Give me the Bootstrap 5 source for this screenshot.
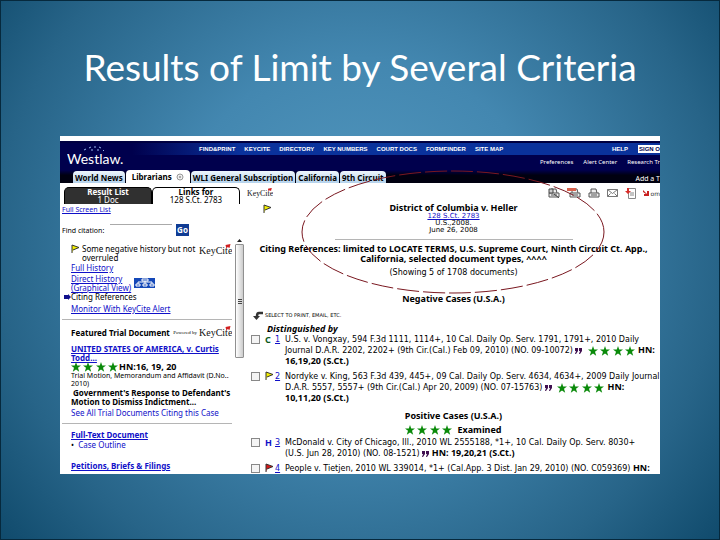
<!DOCTYPE html>
<html lang="en">
<head>
<meta charset="utf-8">
<meta name="viewport" content="width=device-width, initial-scale=1">
<title>Results of Limit by Several Criteria</title>
<link href="https://cdn.jsdelivr.net/npm/bootstrap@5.3.0/dist/css/bootstrap.min.css" rel="stylesheet">
<style>
body{font-family:"Noto Sans","Open Sans",sans-serif;font-size:8px;line-height:9px;color:#000;min-height:100vh;background:radial-gradient(ellipse 68% 90% at 50% 45%,#5499c0 0%,#4387b0 38%,#276488 74%,#0b4566 100%);border:1px solid #06293d}
a{color:#1010c8}
h1{font-family:Lato,sans-serif;font-size:37px;font-weight:400;line-height:44px;color:#fff;margin:0;padding:44px 0 47px}
h2,h3,p{font-size:8px;line-height:10px;margin:0}
h2,h3{font-weight:700}
.shot{margin:0 59px;background:#fff;white-space:nowrap;overflow:hidden;position:relative;padding-top:5px}
.shot svg{display:block;flex:none}
.mast{background:#00004d;border-top:2px solid #000040;color:#fff}
.mast a{color:#fff;text-decoration:none}
.band{background:linear-gradient(90deg,#00004d 12%,#0a329c 30%);height:12px;font:700 6px/13px "Liberation Sans",sans-serif;padding-left:139px}
.band .links{gap:9px}
.band .sign{background:#fff;color:#00004d;height:8px;line-height:8px;margin:2px 0 0 10px;padding-left:1px}
.logo{position:absolute;left:7px;top:1px}
.prefs{height:15px;font-size:6px;line-height:15px;gap:10px}
.tabrow{background:linear-gradient(#00004d,#000010 40%);height:13px;padding-left:13px;gap:1px}
.tabrow .wtab{height:12px;line-height:13px;font-weight:700;background:linear-gradient(#eef6fc,#b4d2ec);border-radius:4px 4px 0 0;padding:0 2px;color:#000}
.tabrow .current{background:#fff;height:13px;padding:0 6px}
.side{width:187px;flex:none}
.rtabs{padding:4px 0 0 4px}
.rtab{width:88px;height:17px;line-height:8px;border-radius:5px 5px 0 0;text-align:center;border:1px solid #000;border-bottom:0}
.rtab.dark{background:#303030}
.rtab a{color:#000;text-decoration:none;display:block}
.rtab.dark a{color:#fff}
.full{font-size:7px;line-height:10px;padding:1px 0 0 2px}
.find{margin-top:8px;height:14px;padding-left:2px}
.find label{width:48px;font-size:7px}
.cite{width:62px;height:12px;border:0;border-top:1px solid #aaa;padding:0;font-size:8px}
.go{background:#103c94;color:#fff;border:0;width:13px;height:12px;line-height:12px;padding:0;font-weight:700;margin-left:4px}
.rule{height:1px;background:#b5b5b5;margin:6px 0 6px 2px}
.pane{width:172px;flex:none;padding-top:7px}
.frame{padding-left:11px}
.fullhist{margin-top:1px}
.monitor{margin-top:3px}
.lead-case{margin-top:5px}
.tight{line-height:9px}
.direct{margin-top:2px;gap:3px}
.citing{margin-left:-7px}
.scroll{width:9px;height:114px;border:1px solid #909090;border-radius:1px;background:linear-gradient(90deg,#fff,#ccc);margin:1px 0 0 3px}
.arrow{margin:2px 0 0 5px}
.pow{font:5px/9px "Liberation Serif",serif;margin-left:auto;padding-right:2px}
.sm{font-size:7px;line-height:8px}
.rating{font-size:9px}
.see{margin-top:2px}
.last{line-height:10px;padding-bottom:2px}
.pet{margin-top:11px}
.results{font-family:"DejaVu Sans",Verdana,sans-serif}
.results h2,.results h3,.results b{font-family:"Noto Sans",sans-serif;font-size:9px}
.results b{line-height:1}
.tools{height:20px}
.tools .icons{margin-left:auto;gap:7px}
.tools .more{color:#333;font-size:6px;text-decoration:none;gap:1px}
.meta{font-size:7px;line-height:7px}
.case{padding-bottom:5px}
.caseflag{position:absolute;left:15px;top:1px}
.divide{width:238px;height:1px;background:#b5b5b5;margin:0 auto 4px}
.select{font-size:5px;line-height:10px;margin-top:6px;padding-left:6px;gap:2px}
.hit{line-height:11px;padding-left:4px}
.hit input{appearance:none;width:9px;height:9px;border:1px solid #888;background:#f4f4f4;margin:1px 5px 0 0;flex:none}
.mark-col{width:10px;flex:none;font:700 9px/11px "Noto Sans",sans-serif}
.num{width:10px;flex:none}
.positive{padding-top:7px}
.third{margin-top:2px}
.shot .inl{display:inline-block;vertical-align:middle;margin:-3px 0}
.ring{position:absolute;left:241px;top:34px;pointer-events:none}
</style>
<script src="https://cdn.jsdelivr.net/npm/bootstrap@5.3.0/dist/js/bootstrap.bundle.min.js"></script>
</head>
<body>
<svg width="0" height="0" class="position-absolute" aria-hidden="true">
<defs>
<symbol id="star" viewBox="0 0 10 10"><path d="M5 0l1.200 3.500H10L7 5.800l1.200 3.900L5 7.400 1.800 9.700 3 5.800 0 3.500h3.800z" fill="#0a8a0a"/></symbol>
<symbol id="stars" viewBox="0 0 48 10"><use href="#star" x="0" width="10" height="10"/><use href="#star" x="12" width="10" height="10"/><use href="#star" x="25" width="10" height="10"/><use href="#star" x="37" width="10" height="10"/></symbol>
<symbol id="flag" viewBox="0 0 9 9"><path d="M1 9V1l7 2.500L2 6" stroke="#333" fill="currentColor"/></symbol>
<symbol id="quote" viewBox="0 0 7 6"><path d="M0 0h3v3L1 6H0l1-3H0zM4 0h3v3L5 6H4l1-3H4z" fill="#401050"/></symbol>
<symbol id="keyflag" viewBox="0 0 5 5"><path d="M0 1l5-1-1 4-2-1-1 2z" fill="#d02020"/></symbol>
<symbol id="keycite" viewBox="0 0 33 13"><text x="0" y="10" font-family="Liberation Serif" font-size="10" fill="#111">KeyCite</text><use href="#keyflag" x="26" y="0" width="6" height="5"/></symbol>
<symbol id="printer" viewBox="0 0 12 10"><path d="M3 5V1h5l1 4M1 5h10v4H1zM3 7h6" fill="#eee" stroke="#555"/></symbol>
</defs>
</svg>
<h1 class="text-center">Results of Limit by Several Criteria</h1>
<main class="shot">
<header class="mast position-relative">
<svg class="logo" width="57" height="23" viewBox="0 0 57 23"><text x="0" y="20" font-family="Lato" font-size="14" fill="#fff">Westlaw.</text><path d="M17 6l2-1M22 4l2-1M27 3h2M32 3l2 1M36 6l1 1M24 6h2M30 6h2" stroke="#9ab8f0"/></svg>
<nav class="band d-flex"><div class="links d-flex"><a href="#">FIND&amp;PRINT</a><a href="#">KEYCITE</a><a href="#">DIRECTORY</a><a href="#">KEY NUMBERS</a><a href="#">COURT DOCS</a><a href="#">FORMFINDER</a><a href="#">SITE MAP</a></div><a class="ms-auto" href="#">HELP</a><a class="sign" href="#">SIGN O</a></nav>
<nav class="prefs d-flex justify-content-end"><a href="#">Preferences</a><a href="#">Alert Center</a><a href="#">Research Tr</a></nav>
<nav class="tabrow d-flex align-items-end"><a class="wtab" href="#">World News</a><a class="wtab current d-flex align-items-center" href="#">Librarians<svg class="ms-1" width="8" height="8" viewBox="0 0 8 8"><circle cx="4" cy="4" r="3" fill="#eee" stroke="#999"/><path d="M3 3l2 2M5 3L3 5" stroke="#aaa"/></svg></a><a class="wtab" href="#">WLI General Subscription</a><a class="wtab" href="#">California</a><a class="wtab" href="#">9th Circuit</a><a class="ms-auto sm" href="#">Add a T</a></nav>
</header>
<div class="d-flex">
<aside class="side">
<div class="rtabs d-flex"><div class="rtab dark"><a href="#"><b>Result List</b><br>1 Doc</a></div><div class="rtab"><a href="#"><b>Links for</b><br>128 S.Ct. 2783</a></div></div>
<a class="full d-block" href="#">Full Screen List</a>
<form class="find d-flex align-items-center"><label for="cite">Find citation:</label><input id="cite" class="cite" type="text"><button class="go" type="button">Go</button></form>
<div class="d-flex">
<div class="pane">
<div class="frame">
<div class="d-flex"><svg width="11" height="9" viewBox="0 0 11 9" color="#f4f000"><use href="#flag" width="9" height="9"/></svg><div>Some negative history but not<br>overruled</div><svg class="ms-auto" width="33" height="13"><use href="#keycite"/></svg></div>
<a class="fullhist d-block" href="#">Full History</a>
<div class="direct d-flex align-items-center"><a href="#">Direct History<br>(Graphical View)</a><svg width="21" height="10" viewBox="0 0 21 10"><path d="M0 0h21v10H0z" fill="#1448b8"/><path d="M8 1h6v2H8zM2 6h4v2H2zM9 6h4v2H9zM16 6h4v2h-4zM4 6V4h14v2M11 3v3" fill="none" stroke="#fff"/></svg></div>
<div class="citing d-flex align-items-center"><svg width="7" height="6" viewBox="0 0 7 6"><path d="M0 1h4V0l3 3-3 3V5H0z" fill="#10108c"/></svg>Citing References</div>
<a class="monitor d-block" href="#">Monitor With KeyCite Alert</a>
</div>
<div class="rule"></div>
<div class="frame">
<div class="d-flex align-items-center"><h2>Featured Trial Document</h2><span class="pow">Powered by</span><svg width="33" height="13"><use href="#keycite"/></svg></div>
<a class="lead-case d-block fw-bold" href="#">UNITED STATES OF AMERICA, v. Curtis<br>Todd...</a>
<div class="rating d-flex fw-bold"><svg width="48" height="10"><use href="#stars"/></svg>HN:16, 19, 20</div>
<p class="sm">Trial Motion, Memorandum and Affidavit (D.No..<br>2010)</p>
<h3 class="tight">&nbsp;Government's Response to Defendant's<br>Motion to Dismiss Indictment...</h3>
<a class="see d-block text-decoration-none" href="#">See All Trial Documents Citing this Case</a>
</div>
<div class="rule"></div>
<div class="frame last"><a class="fw-bold" href="#">Full-Text Document</a><div>•&nbsp; <a class="text-decoration-none" href="#">Case Outline</a></div><a class="pet d-block fw-bold" href="#">Petitions, Briefs &amp; Filings</a></div>
</div>
<div><svg class="arrow" width="5" height="4" viewBox="0 0 5 4"><path d="M0 3l2.500-3L5 3z" fill="#222"/></svg><div class="scroll"><svg width="7" height="112" viewBox="0 0 7 112"><path d="M2 54.500h4M2 56.500h4M2 58.500h4" stroke="#444"/></svg></div></div>
</div>
</aside>
<section class="results flex-grow-1">
<div class="tools d-flex align-items-center"><svg width="26" height="12"><use href="#keycite"/></svg>
<div class="icons d-flex align-items-center">
<svg width="12" height="10" viewBox="0 0 12 10"><use href="#printer"/><path d="M1 1h4v4H1zM6 6l5 4" fill="#ccc" stroke="#444"/></svg>
<svg width="14" height="10" viewBox="0 0 14 10"><use href="#printer" x="2" width="12" height="10"/><path d="M0 0h9v3H0z" fill="#d8604c"/></svg>
<svg width="12" height="10"><use href="#printer"/></svg>
<svg width="11" height="8" viewBox="0 0 11 8"><path d="M.500.500h10v7H.500zM.500.500l5 4 5-4M.500 7.500l3-3M10.500 7.500l-3-3" fill="#fff" stroke="#777"/></svg>
<svg width="11" height="11" viewBox="0 0 11 11"><path d="M3.500.500h7v10h-7zM5 5h4M5 7h4" fill="#fff" stroke="#888"/><path d="M2 0h2v3h2L3 6 0 3h2z" fill="#d8302c"/></svg>
<a class="more d-flex align-items-center" href="#"><svg width="6" height="6" viewBox="0 0 6 6"><path d="M0 0l4 4V1h2v5H1V4h2L0 2z" fill="#c82020"/></svg>om</a>
</div></div>
<div class="case text-center position-relative"><svg class="caseflag" width="11" height="9" color="#f4f000"><use href="#flag"/></svg><h2>District of Columbia v. Heller</h2><div class="meta"><a href="#">128 S.Ct. 2783</a><br>U.S.,2008.<br>June 26, 2008</div></div>
<div class="divide"></div>
<h2 class="text-center">Citing References: limited to LOCATE TERMS, U.S. Supreme Court, Ninth Circuit Ct. App.,<br>California, selected document types, ^^^^</h2>
<p class="text-center pt-1">(Showing 5 of 1708 documents)</p>
<h2 class="text-center pt-3">Negative Cases (U.S.A.)</h2>
<div class="select d-flex"><svg width="10" height="10" viewBox="0 0 10 10"><path d="M10 3H6Q4 3 4 6" fill="none" stroke="#333" stroke-width="2.500"/><path d="M0 6h7l-3.500 4z" fill="#333"/></svg>SELECT TO PRINT, EMAIL, ETC.</div>
<h3 class="fst-italic pt-1 ps-3 ms-1">Distinguished by</h3>
<div class="hit d-flex"><input type="checkbox" aria-label="Select 1"><span class="mark-col" style="color:#0a5a1a">C</span><a class="num" href="#">1</a><div>U.S. v. Vongxay, 594 F.3d 1111, 1114+, 10 Cal. Daily Op. Serv. 1791, 1791+, 2010 Daily<br>Journal D.A.R. 2202, 2202+ (9th Cir.(Cal.) Feb 09, 2010) (NO. 09-10072) <svg class="inl" width="7" height="6"><use href="#quote"/></svg>&nbsp; <svg class="inl" width="48" height="10"><use href="#stars"/></svg> <b>HN:</b><br><b>16,19,20 (S.Ct.)</b></div></div>
<div class="hit d-flex mt-1"><input type="checkbox" aria-label="Select 2"><span class="mark-col"><svg width="9" height="9" color="#f4f000"><use href="#flag"/></svg></span><a class="num" href="#">2</a><div>Nordyke v. King, 563 F.3d 439, 445+, 09 Cal. Daily Op. Serv. 4634, 4634+, 2009 Daily Journal<br>D.A.R. 5557, 5557+ (9th Cir.(Cal.) Apr 20, 2009) (NO. 07-15763) <svg class="inl" width="7" height="6"><use href="#quote"/></svg>&nbsp; <svg class="inl" width="48" height="10"><use href="#stars"/></svg> <b>HN:</b><br><b>10,11,20 (S.Ct.)</b></div></div>
<h2 class="positive text-center">Positive Cases (U.S.A.)</h2>
<h3 class="d-flex justify-content-center pt-1 gap-1"><svg width="48" height="10"><use href="#stars"/></svg>Examined</h3>
<div class="hit third d-flex"><input type="checkbox" aria-label="Select 3"><span class="mark-col" style="color:#1010c8">H</span><a class="num" href="#">3</a><div>McDonald v. City of Chicago, Ill., 2010 WL 2555188, *1+, 10 Cal. Daily Op. Serv. 8030+<br>(U.S. Jun 28, 2010) (NO. 08-1521) <svg class="inl" width="7" height="6"><use href="#quote"/></svg> <b>HN: 19,20,21 (S.Ct.)</b></div></div>
<div class="hit d-flex mt-1"><input type="checkbox" aria-label="Select 4"><span class="mark-col"><svg width="9" height="9" color="#d81818"><use href="#flag"/></svg></span><a class="num" href="#">4</a><div>People v. Tietjen, 2010 WL 339014, *1+ (Cal.App. 3 Dist. Jan 29, 2010) (NO. C059369) <b>HN:</b></div></div>
</section>
</div>
<svg class="ring" width="305" height="125" viewBox="0 0 305 125"><ellipse cx="152" cy="62" rx="151" ry="61" fill="none" stroke="#7a1820" stroke-dasharray="22 4"/></svg>
</main>
</body>
</html>
